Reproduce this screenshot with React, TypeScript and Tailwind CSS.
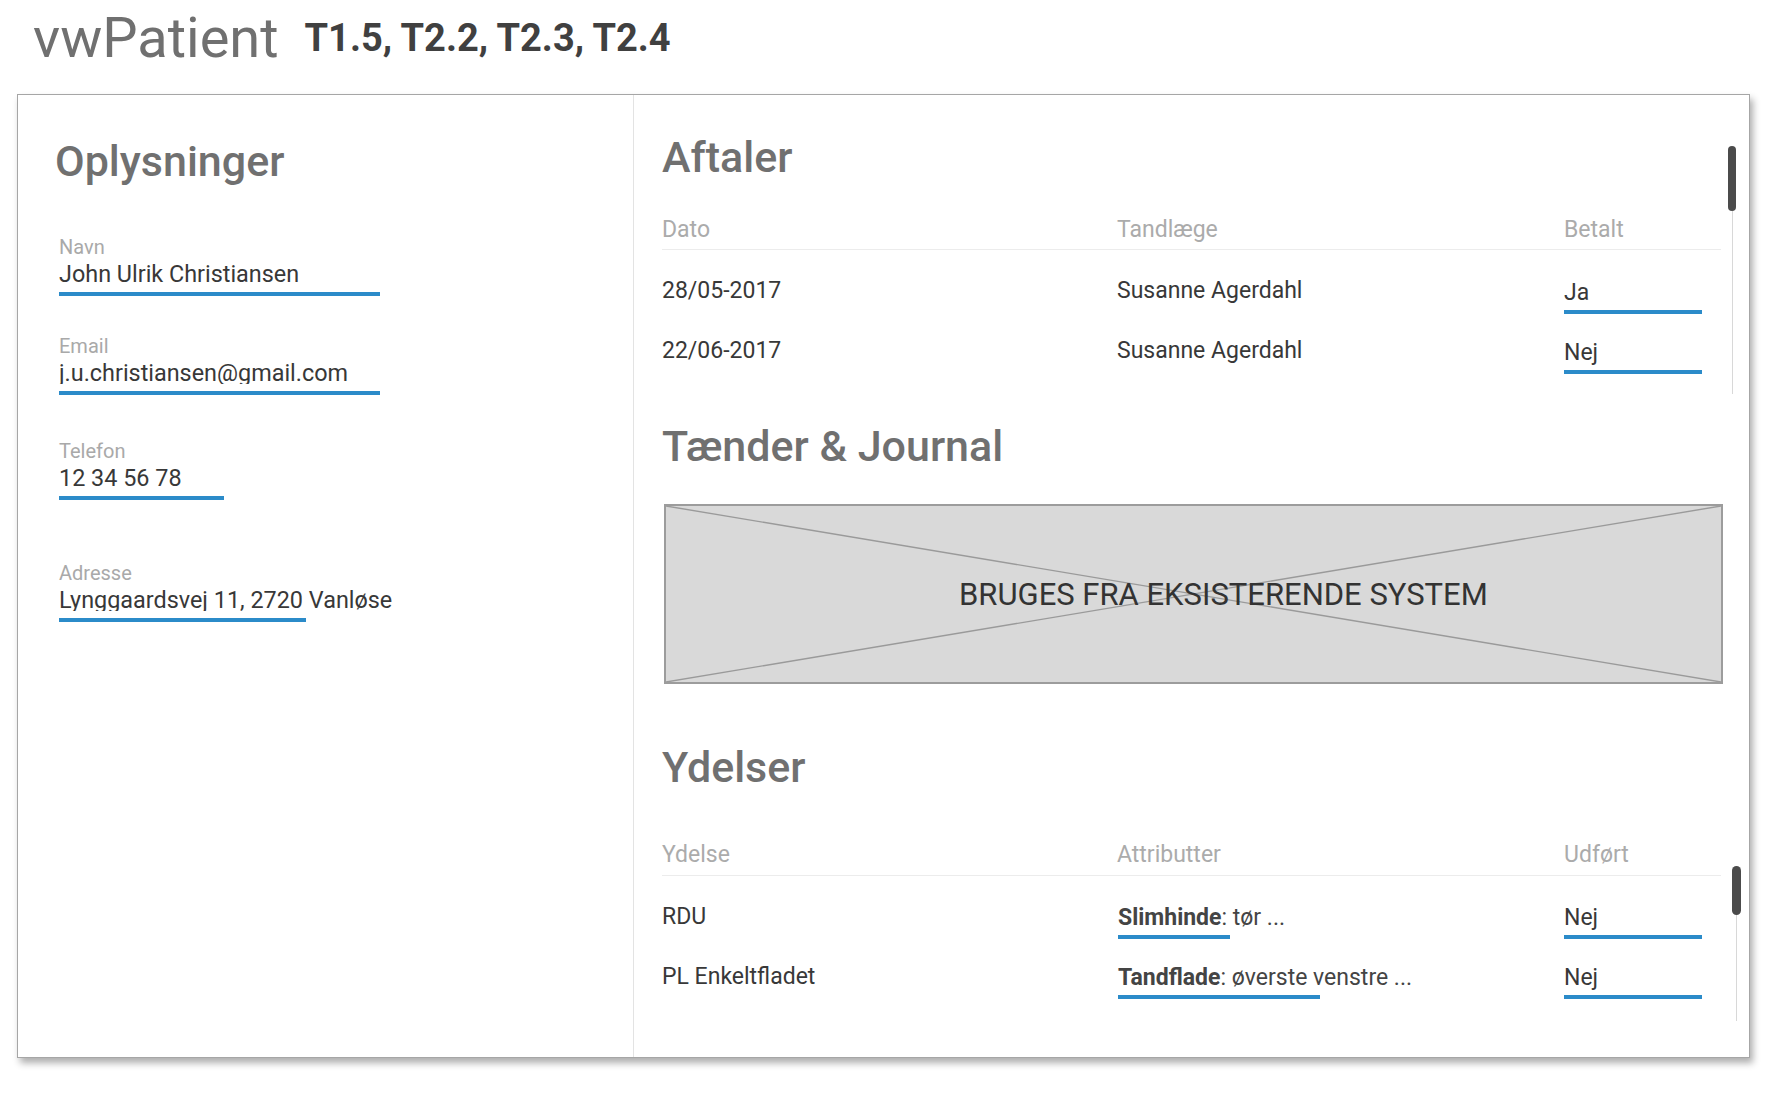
import React from "react";

function Field({
  label,
  value,
  line,
  className,
}: {
  label: string;
  value: string;
  line: string;
  className: string;
}) {
  return (
    <div className={className}>
      <div className="text-[20px] leading-[19px] text-[#a9a9a9]">{label}</div>
      <div className="mt-[6px] h-[22px] overflow-hidden whitespace-nowrap text-[23.4px] leading-[23px] text-[#383838]">
        {value}
      </div>
      <div className={`mt-[7px] h-[4px] bg-[#2b8bc9] ${line}`} />
    </div>
  );
}

function Underlined({ children, w, top }: { children: React.ReactNode; w: string; top: string }) {
  return (
    <div className="flex flex-col">
      <div className={`${top} h-[23px] whitespace-nowrap`}>{children}</div>
      <div className={`mt-[6px] h-[4px] bg-[#2b8bc9] ${w}`} />
    </div>
  );
}

export default function App() {
  return (
    <div className="relative h-[1100px] w-[1770px] overflow-hidden bg-white font-['Roboto',sans-serif]">
      {/* Header */}
      <div className="flex h-[94px] items-start pl-[33px] pt-[10px]">
        <span className="text-[56px] leading-[56px] text-[#707070]">vwPatient</span>
        <span className="ml-[26px] mt-[9px] text-[38px] font-bold leading-[38px] text-[#404040]">
          T1.5, T2.2, T2.3, T2.4
        </span>
      </div>

      {/* Card */}
      <div className="ml-[17px] flex h-[964px] w-[1733px] border border-[#a6a6a6] bg-white shadow-[3px_5px_7px_rgba(0,0,0,0.32)]">
        {/* Left column */}
        <div className="w-[616px] shrink-0 border-r border-[#e3e3e3] pt-[45px]">
          <h2 className="pl-[37px] text-[43px] font-medium leading-[43px] text-[#707070]">Oplysninger</h2>
          <div className="pl-[41px]">
            <Field className="mt-[55px]" label="Navn" value="John Ulrik Christiansen" line="w-[321px]" />
            <Field className="mt-[41px]" label="Email" value="j.u.christiansen@gmail.com" line="w-[321px]" />
            <Field className="mt-[47px]" label="Telefon" value="12 34 56 78" line="w-[165px]" />
            <Field className="mt-[64px]" label="Adresse" value="Lynggaardsvej 11, 2720 Vanløse" line="w-[247px]" />
          </div>
        </div>

        {/* Right column */}
        <div className="flex-1 pl-[28px]">
          {/* Aftaler */}
          <div className="flex">
            <div className="w-[1059px] pt-[41px]">
              <h2 className="text-[43px] font-medium leading-[43px] text-[#707070]">Aftaler</h2>
              <div className="mt-[40px] flex h-[21px] text-[23px] leading-[21px] text-[#ababab]">
                <div className="w-[455px]">Dato</div>
                <div className="w-[447px]">Tandlæge</div>
                <div className="flex-1">Betalt</div>
              </div>
              <div className="mt-[9px] h-px bg-[#ececec]" />
              <div className="mt-[29px]">
                {[
                  ["28/05-2017", "Susanne Agerdahl", "Ja"],
                  ["22/06-2017", "Susanne Agerdahl", "Nej"],
                ].map((r) => (
                  <div key={r[0]} className="flex h-[60px] text-[23px] leading-[23px] text-[#383838]">
                    <div className="w-[455px]">{r[0]}</div>
                    <div className="w-[447px]">{r[1]}</div>
                    <div className="flex-1">
                      <Underlined w="w-[138px]" top="mt-[2px]">{r[2]}</Underlined>
                    </div>
                  </div>
                ))}
              </div>
            </div>
            <div className="ml-[7px] flex w-[8px] flex-col items-center pt-[51px]">
              <div className="h-[65px] w-[8px] rounded-full bg-[#4b4b4b]" />
              <div className="h-[183px] w-px bg-[#d8d8d8]" />
            </div>
          </div>

          {/* Tænder & Journal */}
          <h2 className="mt-[26px] text-[43px] font-medium leading-[43px] text-[#707070]">Tænder &amp; Journal</h2>
          <div className="relative ml-[2px] mt-[36px] flex h-[180px] w-[1059px] items-center border-2 border-[#9c9c9c] bg-[#d9d9d9] pl-[293px]">
            <svg
              className="absolute inset-0 h-full w-full"
              viewBox="0 0 100 100"
              preserveAspectRatio="none"
            >
              <line x1="0" y1="0" x2="100" y2="100" stroke="#9a9a9a" strokeWidth="1.4" vectorEffect="non-scaling-stroke" />
              <line x1="0" y1="100" x2="100" y2="0" stroke="#9a9a9a" strokeWidth="1.4" vectorEffect="non-scaling-stroke" />
            </svg>
            <span className="relative whitespace-nowrap text-[31px] leading-[31px] text-[#333333]">
              BRUGES FRA EKSISTERENDE SYSTEM
            </span>
          </div>

          {/* Ydelser */}
          <div className="flex">
            <div className="w-[1059px]">
              <h2 className="mt-[62px] text-[43px] font-medium leading-[43px] text-[#707070]">Ydelser</h2>
              <div className="mt-[55px] flex h-[21px] text-[23px] leading-[21px] text-[#ababab]">
                <div className="w-[455px]">Ydelse</div>
                <div className="w-[447px]">Attributter</div>
                <div className="flex-1">Udført</div>
              </div>
              <div className="mt-[10px] h-px bg-[#ececec]" />
              <div className="mt-[29px]">
                <div className="flex h-[60px] text-[23px] leading-[23px] text-[#383838]">
                  <div className="w-[455px]">RDU</div>
                  <div className="w-[447px]">
                    <div className="flex flex-col pl-[1px]">
                      <div className="mt-[1px] h-[23px] whitespace-nowrap text-[#444]">
                        <span className="font-bold">Slimhinde</span>: tør ...
                      </div>
                      <div className="mt-[6px] h-[4px] w-[112px] bg-[#2b8bc9]" />
                    </div>
                  </div>
                  <div className="flex-1">
                    <Underlined w="w-[138px]" top="mt-[1px]">Nej</Underlined>
                  </div>
                </div>
                <div className="flex h-[60px] text-[23px] leading-[23px] text-[#383838]">
                  <div className="w-[455px]">PL Enkeltfladet</div>
                  <div className="w-[447px]">
                    <div className="flex flex-col pl-[1px]">
                      <div className="mt-[1px] h-[23px] whitespace-nowrap text-[#444]">
                        <span className="font-bold">Tandflade</span>: øverste venstre ...
                      </div>
                      <div className="mt-[6px] h-[4px] w-[202px] bg-[#2b8bc9]" />
                    </div>
                  </div>
                  <div className="flex-1">
                    <Underlined w="w-[138px]" top="mt-[1px]">Nej</Underlined>
                  </div>
                </div>
              </div>
            </div>
            <div className="ml-[11px] flex w-[9px] flex-col items-center pt-[182px]">
              <div className="h-[49px] w-[9px] rounded-full bg-[#4b4b4b]" />
              <div className="h-[106px] w-px bg-[#d8d8d8]" />
            </div>
          </div>
        </div>
      </div>
    </div>
  );
}
